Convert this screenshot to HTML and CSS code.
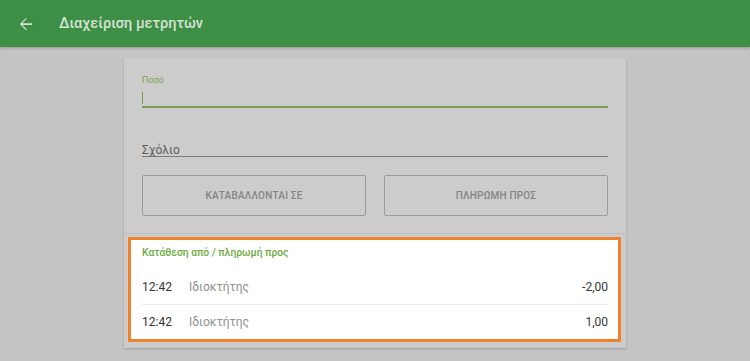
FILE: index.html
```html
<!DOCTYPE html>
<html lang="el">
<head>
<meta charset="utf-8">
<title>Διαχείριση μετρητών</title>
<link rel="stylesheet" href="styles.css">
</head>
<body>
<header class="appbar">
  <svg class="back" width="14" height="14" viewBox="0 0 16 16" aria-hidden="true">
    <path d="M15 7H3.8l5.1-5.1L8 1 1 8l7 7 .9-.9L3.8 9H15z" fill="#d6e2d6"/>
  </svg>
  <h1 class="title">Διαχείριση μετρητών</h1>
</header>
<main class="card">
  <section class="form">
    <div class="field field-active">
      <label class="float-label">Ποσό</label>
      <div class="input"><span class="caret"></span></div>
    </div>
    <div class="field field-comment">
      <div class="input placeholder">Σχόλιο</div>
    </div>
    <div class="buttons">
      <button class="btn">ΚΑΤΑΒΑΛΛΟΝΤΑΙ ΣΕ</button>
      <button class="btn">ΠΛΗΡΩΜΗ ΠΡΟΣ</button>
    </div>
  </section>
  <section class="list">
    <div class="list-title">Κατάθεση από / πληρωμή προς</div>
    <div class="row">
      <span class="time">12:42</span>
      <span class="name">Ιδιοκτήτης</span>
      <span class="amount">-2,00</span>
    </div>
    <div class="row">
      <span class="time">12:42</span>
      <span class="name">Ιδιοκτήτης</span>
      <span class="amount">1,00</span>
    </div>
  </section>
</main>
</body>
</html>
```
FILE: styles.css
```css
* { box-sizing: border-box; }
html, body { margin: 0; padding: 0; }
body {
  background: #c4c4c4;
  font-family: Roboto, "Noto Sans", "Liberation Sans", sans-serif;
  width: 750px;
  height: 361px;
  overflow: hidden;
}
.appbar {
  height: 47px;
  background: #3d8f45;
  display: flex;
  align-items: center;
  padding-left: 19px;
  box-shadow: 0 1px 3px rgba(0,0,0,0.25);
}
.back { display: block; margin-top: 0; }
.title {
  margin: 0 0 0 26px;
  font-size: 14.5px;
  font-weight: 500;
  color: #d6e2d6;
  letter-spacing: 0;
}
.card {
  width: 502px;
  margin: 11px auto 0;
  background: #cccccc;
  box-shadow: 0 1px 2px rgba(0,0,0,0.2);
  padding-bottom: 6px;
}
.form {
  padding: 17px 18px 17px;
  border-bottom: 1px solid #bdbdbd;
}
.field-active { height: 33px; position: relative; }
.float-label {
  display: block;
  font-size: 9px;
  color: #7c9f55;
  line-height: 11px;
}
.field-active .input {
  height: 22px;
  border-bottom: 2px solid #789f54;
  padding-top: 6px;
}
.caret {
  display: block;
  width: 1px;
  height: 12px;
  background: #789f54;
}
.field-comment { margin-top: 33px; }
.placeholder {
  font-size: 12px;
  color: #606060;
  line-height: 14px;
  height: 16px;
  padding-top: 2px;
  border-bottom: 1px solid #7a7a7a;
}
.buttons {
  display: flex;
  gap: 18px;
  margin-top: 18px;
}
.btn {
  flex: 1;
  height: 41px;
  border: 1px solid #9a9a9a;
  border-radius: 2px;
  background: transparent;
  font-family: inherit;
  font-size: 10px;
  font-weight: 500;
  color: #858585;
  letter-spacing: 0.2px;
}
.list {
  margin: 3px 5px 0 4px;
  background: #ffffff;
  border: 3px solid #f0812f;
  padding: 0 10px 0 11px;
}
.list-title {
  font-size: 10.3px;
  font-weight: 500;
  color: #6eaa3f;
  padding-top: 6px;
  height: 30px;
}
.row {
  display: flex;
  align-items: center;
  height: 35px;
  font-size: 12px;
  border-bottom: 1px solid #ededed;
}
.row:last-child { border-bottom: none; height: 34px; }
.time { width: 47px; color: #333333; }
.name { flex: 1; color: #909090; }
.amount { color: #333333; }
```
